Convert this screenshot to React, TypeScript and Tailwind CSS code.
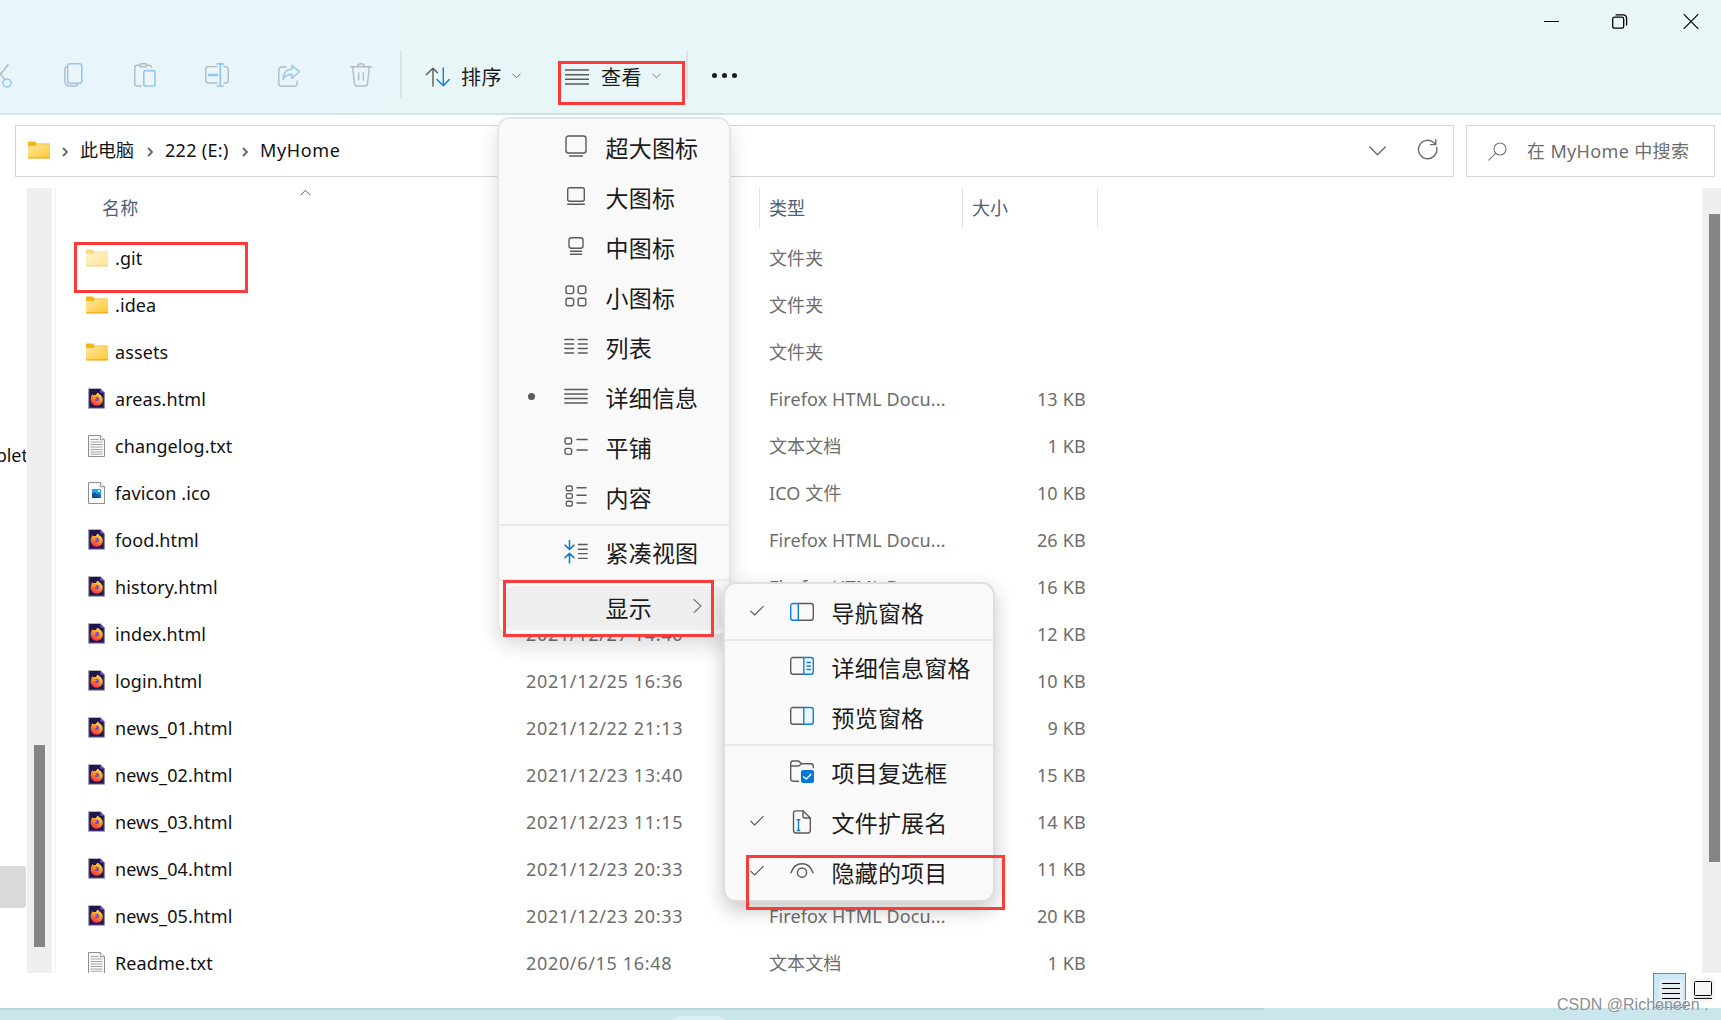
import type { ReactNode } from "react";

type Kind = "folder" | "hidden" | "firefox" | "text" | "image";

interface FileRow {
  name: string;
  kind: Kind;
  date?: string;
  type?: string;
  size?: string;
}

const FOX = "Firefox HTML Docu...";

const files: FileRow[] = [
  { name: ".git", kind: "hidden", type: "文件夹" },
  { name: ".idea", kind: "folder", type: "文件夹" },
  { name: "assets", kind: "folder", type: "文件夹" },
  { name: "areas.html", kind: "firefox", type: FOX, size: "13 KB" },
  { name: "changelog.txt", kind: "text", type: "文本文档", size: "1 KB" },
  { name: "favicon .ico", kind: "image", type: "ICO 文件", size: "10 KB" },
  { name: "food.html", kind: "firefox", type: FOX, size: "26 KB" },
  { name: "history.html", kind: "firefox", type: FOX, size: "16 KB" },
  { name: "index.html", kind: "firefox", date: "2021/12/27 14:40", size: "12 KB" },
  { name: "login.html", kind: "firefox", date: "2021/12/25 16:36", size: "10 KB" },
  { name: "news_01.html", kind: "firefox", date: "2021/12/22 21:13", size: "9 KB" },
  { name: "news_02.html", kind: "firefox", date: "2021/12/23 13:40", size: "15 KB" },
  { name: "news_03.html", kind: "firefox", date: "2021/12/23 11:15", size: "14 KB" },
  { name: "news_04.html", kind: "firefox", date: "2021/12/23 20:33", size: "11 KB" },
  { name: "news_05.html", kind: "firefox", date: "2021/12/23 20:33", type: FOX, size: "20 KB" },
  { name: "Readme.txt", kind: "text", date: "2020/6/15 16:48", type: "文本文档", size: "1 KB" },
];

function Svg({ w = 24, h = 24, children }: { w?: number; h?: number; children: ReactNode }) {
  return (
    <svg
      width={w}
      height={h}
      viewBox={`0 0 ${w} ${h}`}
      fill="none"
      stroke="#5a5a5a"
      strokeWidth="1.4"
      strokeLinecap="round"
      strokeLinejoin="round"
      className="block shrink-0"
    >
      {children}
    </svg>
  );
}

function Defs() {
  return (
    <svg width="0" height="0" className="absolute">
      <defs>
        <linearGradient id="folderFill" x1="0" y1="0" x2="1" y2="1">
          <stop offset="0" stopColor="#ffe8a0" />
          <stop offset="1" stopColor="#ffc832" />
        </linearGradient>
        <linearGradient id="foxFill" x1="0.8" y1="0" x2="0.3" y2="1">
          <stop offset="0" stopColor="#fff04a" />
          <stop offset="0.45" stopColor="#ff9a1f" />
          <stop offset="1" stopColor="#f5264f" />
        </linearGradient>
      </defs>
    </svg>
  );
}

function Folder() {
  return (
    <svg width="22" height="18" viewBox="0 0 22 18" className="block">
      <path d="M0 1.2Q0 .5.8.5H6.3Q7 .5 7.4 1L8.6 2.5H21.4Q22 2.5 22 3.2V8H0Z" fill="#f4b619" />
      <path d="M0 5H7.5L9 3.2H22V16.6Q22 17.2 21.4 17.2H.6Q0 17.2 0 16.6Z" fill="url(#folderFill)" />
      <path d="M0 16.2H22V16.8Q22 17.5 21.4 17.5H.6Q0 17.5 0 16.8Z" fill="#efaa1d" />
    </svg>
  );
}

function FileIcon({ kind }: { kind: Kind }) {
  if (kind === "folder") return <Folder />;
  if (kind === "hidden")
    return (
      <div className="opacity-50">
        <Folder />
      </div>
    );
  if (kind === "firefox")
    return (
      <svg width="17" height="21" viewBox="0 0 17 21" className="block">
        <path d="M.5.5H12.5L16.5 4.5V20.5H.5Z" fill="#21164a" stroke="#b5b3bd" strokeWidth="1" />
        <path d="M1.3 1.2V19.6H15.9V5" fill="none" stroke="#4b3b91" strokeWidth=".9" />
        <path d="M12.3.8L16.3 4.8H13Q12.3 4.8 12.3 4Z" fill="#7a4fe0" />
        <path
          d="M4.2 6C4.6 6.8 5 7 5.5 7.2C6.5 6.8 7.3 6.9 8 7.1C8.2 6 9 5.2 10 4.8C10.4 6.4 14.8 7.2 14.8 11.7A6 6 0 0 1 2.7 11.9C2.7 9.5 3.4 8.4 4.2 6Z"
          fill="url(#foxFill)"
        />
        <circle cx="8.8" cy="11" r="2.2" fill="#7a46c8" />
        <path d="M5.2 9.2Q7.2 9.1 8.9 10.1Q8.3 11.4 6.7 11.4Q5.6 10.8 5.2 9.2Z" fill="#ff981f" />
      </svg>
    );
  return (
    <svg width="17" height="22" viewBox="0 0 17 22" className="block">
      <path d="M.5.5H12.3L16.5 4.7V21.5H.5Z" fill="#fafafa" stroke="#8d8f8f" />
      <path d="M12.3.5V4.7H16.5" fill="#fff" stroke="#8d8f8f" />
      {kind === "text" ? (
        <path
          d="M2.5 4.5H10.5M2.5 7H14.5M2.5 9.5H14.5M2.5 12H14.5M2.5 14.5H14.5M2.5 17H14.5M2.5 19.2H14.5"
          stroke="#a3a5a5"
          strokeWidth="1"
        />
      ) : (
        <>
          <rect x="4" y="7" width="9" height="9" fill="#27a4ea" />
          <path d="M4 12L6.5 10L13 16H4Z" fill="#104f91" />
          <path d="M8.5 12L10.5 10.8L13 13V16H12Z" fill="#1a6eb5" />
          <rect x="10" y="8" width="2" height="2" fill="#d7f2ff" />
        </>
      )}
    </svg>
  );
}

const B = "#0f7fd8";

const icons: Record<string, ReactNode> = {
  xlarge: (
    <Svg>
      <rect x="2" y="1" width="20" height="17" rx="2.5" />
      <path d="M5.5 21H18.5" />
    </Svg>
  ),
  large: (
    <Svg>
      <rect x="3.7" y="2.7" width="16.6" height="13.6" rx="2" />
      <path d="M3.7 19.2H20.3" />
    </Svg>
  ),
  medium: (
    <Svg>
      <rect x="5" y="2.7" width="14" height="10.6" rx="2.5" />
      <path d="M6.5 16.2H17.5M6.5 19.2H17.5" />
    </Svg>
  ),
  small: (
    <Svg>
      <rect x="2" y="1" width="7.6" height="7.6" rx="2" />
      <rect x="14.2" y="1" width="7.6" height="7.6" rx="2" />
      <rect x="2" y="13.2" width="7.6" height="7.6" rx="2" />
      <rect x="14.2" y="13.2" width="7.6" height="7.6" rx="2" />
    </Svg>
  ),
  list: (
    <Svg>
      <path d="M.8 4.5H9.6M.8 9H9.6M.8 13.5H9.6M.8 18H9.6M14.4 4.5H23.2M14.4 9H23.2M14.4 13.5H23.2M14.4 18H23.2" />
    </Svg>
  ),
  details: (
    <Svg>
      <path d="M.8 4.5H23.2M.8 9H23.2M.8 13.5H23.2M.8 18H23.2" />
    </Svg>
  ),
  tiles: (
    <Svg>
      <rect x="1" y="3" width="6.6" height="6" rx="2" />
      <rect x="1" y="13.4" width="6.6" height="6" rx="2" />
      <path d="M13 4.5H23.2M13 15H23.2" />
    </Svg>
  ),
  content: (
    <Svg>
      <rect x="2.3" y="1" width="6" height="4.8" rx="1.6" />
      <rect x="2.3" y="8.6" width="6" height="4.8" rx="1.6" />
      <rect x="2.3" y="16.2" width="6" height="4.8" rx="1.6" />
      <path d="M13 2.8H22M13 10.3H22M13 18H22" />
    </Svg>
  ),
  compact: (
    <Svg>
      <path d="M5.5 0V9M1 5.2L5.5 9.5L10 5.2M5.5 23V13.5M1 17.6L5.5 13.4L10 17.6" stroke={B} strokeWidth="1.6" />
      <path d="M14.4 4.5H23.2M14.4 9.2H23.2M14.4 13.6H23.2M14.4 18.4H23.2" />
    </Svg>
  ),
  nav: (
    <Svg>
      <path d="M8.5 3.5H20.8Q23.3 3.5 23.3 6V17.7Q23.3 20.2 20.8 20.2H8.5" />
      <path d="M8.3 3.5H3.2Q.7 3.5.7 6V17.7Q.7 20.2 3.2 20.2H8.3Z" fill="#eef6fc" stroke={B} />
    </Svg>
  ),
  detailPane: (
    <Svg>
      <path d="M13.5 2.5H3.2Q.7 2.5.7 5V16.7Q.7 19.2 3.2 19.2H13.5" />
      <path d="M13.8 2.5H20.8Q23.3 2.5 23.3 5V16.7Q23.3 19.2 20.8 19.2H13.8Z" fill="#eef6fc" stroke={B} />
      <path d="M17 7.5H20.4M17 11H20.4M17 14.5H20.4" stroke={B} />
    </Svg>
  ),
  preview: (
    <Svg>
      <path d="M13.5 2.5H3.2Q.7 2.5.7 5V16.7Q.7 19.2 3.2 19.2H13.5" />
      <path d="M13.8 2.5H20.8Q23.3 2.5 23.3 5V16.7Q23.3 19.2 20.8 19.2H13.8Z" fill="#eef6fc" stroke={B} />
    </Svg>
  ),
  checkbox: (
    <Svg>
      <path d="M8.5 21.2H3.2Q.7 21.2.7 18.7V3.2Q.7 1 3 1H7.6Q9 1 10 2.2L11.5 3.8H20.5Q23.3 3.8 23.3 6.5V7.5M.9 6H7.8Q9 6 10 5L11.4 3.8" />
      <rect x="11" y="10" width="13" height="13" rx="2" fill="#0078d7" stroke="none" />
      <path d="M13.7 16.7L16.3 19L21 14.2" stroke="#fff" />
    </Svg>
  ),
  ext: (
    <Svg>
      <path d="M5.7.9H13.2L20.3 8V20.6Q20.3 23 17.9 23H5.9Q3.5 23 3.5 20.6V3.1Q3.5.9 5.7.9Z" />
      <path d="M13 1V6.2Q13 8 14.8 8H20" />
      <path d="M6.7 9.8H10.3M8.5 9.8V20.5M6.7 20.5H10.3" stroke={B} strokeLinecap="butt" />
    </Svg>
  ),
  eye: (
    <Svg>
      <path d="M1 12.8C5 .8 19 .8 23 12.8" />
      <circle cx="12" cy="12.6" r="4.6" />
    </Svg>
  ),
};

interface MenuEntry {
  label: string;
  icon?: string;
  bullet?: boolean;
  checked?: boolean;
  open?: boolean;
}

const viewGroups: MenuEntry[][] = [
  [
    { label: "超大图标", icon: "xlarge" },
    { label: "大图标", icon: "large" },
    { label: "中图标", icon: "medium" },
    { label: "小图标", icon: "small" },
    { label: "列表", icon: "list" },
    { label: "详细信息", icon: "details", bullet: true },
    { label: "平铺", icon: "tiles" },
    { label: "内容", icon: "content" },
  ],
  [{ label: "紧凑视图", icon: "compact" }],
  [{ label: "显示", open: true }],
];

const showGroups: MenuEntry[][] = [
  [{ label: "导航窗格", icon: "nav", checked: true }],
  [
    { label: "详细信息窗格", icon: "detailPane" },
    { label: "预览窗格", icon: "preview" },
  ],
  [
    { label: "项目复选框", icon: "checkbox" },
    { label: "文件扩展名", icon: "ext", checked: true },
    { label: "隐藏的项目", icon: "eye", checked: true },
  ],
];

function Item({ e }: { e: MenuEntry }) {
  return (
    <li className="flex h-[50px] items-center px-[7px]">
      <div
        className={
          e.open
            ? "flex h-11 w-full items-center rounded-md bg-[#efefef]"
            : "flex h-11 w-full items-center"
        }
      >
        <span className="flex w-[58px] justify-center pr-[8px] pb-[4px]">
          {e.bullet && <span className="block size-[7px] rounded-full bg-[#5a5a5a]" />}
          {e.checked && (
            <Svg w={14} h={12}>
              <path d="M.7 6.2L4.6 10L13.3 1.3" strokeWidth="1.1" />
            </Svg>
          )}
        </span>
        <span className="mr-[17px] block h-6 w-6 -translate-y-px">{e.icon && icons[e.icon]}</span>
        <span className="grow pb-px pl-[0.5px] text-[23px] leading-[30px] tracking-[0.2px] whitespace-nowrap text-[#1b1b1b]">
          {e.label}
        </span>
        {e.open && (
          <span className="mr-[20px] pb-[4px]">
            <Svg w={9} h={16}>
              <path d="M1 1.5L8 8L1 14.5" stroke="#777" strokeWidth="1.1" />
            </Svg>
          </span>
        )}
      </div>
    </li>
  );
}

function Menu({ groups }: { groups: MenuEntry[][] }) {
  return (
    <>
      {groups.map((g, i) => (
        <ul key={i} className={i > 0 ? "mt-px border-t-2 border-[#e9e9e9] pt-[2px]" : ""}>
          {g.map((e) => (
            <Item key={e.label} e={e} />
          ))}
        </ul>
      ))}
    </>
  );
}

function Crumb() {
  return (
    <Svg w={6} h={10}>
      <path d="M1 1L5 5L1 9" stroke="#666" strokeWidth="1.8" strokeLinecap="butt" />
    </Svg>
  );
}

function DropChevron() {
  return (
    <Svg w={9} h={6}>
      <path d="M.8 1L4.5 4.8L8.2 1" stroke="#777" strokeWidth="1" />
    </Svg>
  );
}

const G = "#b4bcbe";
const L = "#93c8ee";

function Toolbar() {
  return (
    <div className="flex h-[72px] items-start pt-[14px]">
      <div className="flex h-[40px] w-[400px] shrink-0 items-center">
        <span className="w-[64px] pt-px">
          <Svg w={12} h={24}>
            <path d="M8 .8L0 11M0 9L4.5 15.5" stroke={G} />
            <circle cx="7" cy="19" r="4" stroke={L} strokeWidth="1.6" />
          </Svg>
        </span>
        <span className="w-[70px]">
          <Svg w={19} h={24}>
            <path d="M3 3.5Q.8 4 .8 6.5V17.5Q.8 23 6 23H11Q13.4 23 14 21" stroke={G} />
            <rect x="3.6" y=".8" width="14.2" height="19.6" rx="2.6" stroke={L} strokeWidth="1.6" fill="#edf5f7" />
          </Svg>
        </span>
        <span className="w-[71px]">
          <Svg w={23} h={24}>
            <path d="M6 2.3H3Q.8 2.3.8 4.5V20.7Q.8 23 3 23H7M12.3 2.3H15Q17.2 2.3 17.4 4.4" stroke={G} />
            <rect x="5.5" y=".8" width="7.4" height="3" rx="1.5" stroke={G} />
            <rect x="9.8" y="7.6" width="11.2" height="15.4" rx="1.8" stroke={L} strokeWidth="1.6" fill="#edf5f7" />
          </Svg>
        </span>
        <span className="w-[73px]">
          <Svg w={24} h={24}>
            <path
              d="M12 3.6H3.2Q.8 3.6.8 6V17.6Q.8 20 3.2 20H12M19 3.6H20.8Q23.2 3.6 23.2 6V17.6Q23.2 20 20.8 20H19"
              stroke={G}
            />
            <path d="M12.3.9H18.3M12.3 23H18.3M15.3.9V23" stroke={L} strokeWidth="1.7" />
            <path d="M4 12H12" stroke={L} strokeWidth="2.6" />
          </Svg>
        </span>
        <span className="w-[72px] pt-px">
          <Svg w={23} h={24}>
            <path d="M8 3H4Q.8 3 .8 6V19Q.8 22.2 4 22.2H16Q19.2 22.2 19.2 19V17" stroke={G} />
            <path d="M14 1.4L21.4 7.8L14 14.2V10.6C10 10.4 7 12 5 15.4C5.2 9.2 8.6 5.4 14 5Z" stroke={L} strokeWidth="1.5" />
          </Svg>
        </span>
        <span>
          <Svg w={22} h={24}>
            <path
              d="M.7 3.7H21.3M7.5 3.5Q8 .8 11 .8Q14 .8 14.5 3.5M2.7 4L4.5 20.8Q4.8 23 6.8 23H15.2Q17.2 23 17.5 20.8L19.3 4M8.7 10V17M13.3 10V17"
              stroke={G}
            />
          </Svg>
        </span>
      </div>
      <div className="-mt-1 h-12 w-[2px] bg-[#d7e4e6]" />
      <div className="ml-[23px] flex h-10 items-center">
        <span className="pt-[3px]">
          <Svg w={25} h={20}>
            <path d="M8 19V1.3M1.5 7.6L8 1.3L12.5 5.7" />
            <path d="M18.3 1V18.6M12 12.6L18.3 18.8L24.3 12.6" stroke={B} />
          </Svg>
        </span>
        <span className="ml-[11px] pt-[6px] text-[20px] leading-6 tracking-[0.5px] text-[#1b1b1b]">排序</span>
        <span className="ml-[10px] pt-px">
          <DropChevron />
        </span>
      </div>
      <div className="relative ml-[44px] flex h-10 w-[120px] items-center">
        <svg width="24" height="24" viewBox="0 0 24 24" fill="none" stroke="#5a5a5a" strokeWidth="1.4" className="mt-[3px]">
          <path d="M0 5H24M0 9.7H24M0 14.3H24M0 19H24" />
        </svg>
        <span className="ml-3 pt-[6px] text-[20px] leading-6 tracking-[0.5px] text-[#1b1b1b]">查看</span>
        <span className="ml-[10px] pt-px">
          <DropChevron />
        </span>
        <div className="absolute top-[6px] -left-[7px] h-[44px] w-[127px] border-[3px] border-[#fc3a3a]" />
      </div>
      <div className="-mt-1 ml-px h-12 w-[2px] bg-[#d7e4e6]" />
      <div className="mt-[18px] ml-[24px] flex gap-[5px]">
        <span className="size-[5px] rounded-full bg-[#1b1b1b]" />
        <span className="size-[5px] rounded-full bg-[#1b1b1b]" />
        <span className="size-[5px] rounded-full bg-[#1b1b1b]" />
      </div>
    </div>
  );
}

function TitleBar() {
  return (
    <div className="flex h-[41px] items-start justify-end gap-[54px] pt-[14px] pr-[22px]">
      <svg width="15" height="15" viewBox="0 0 15 15" stroke="#000" fill="none" className="-mr-px">
        <path d="M0 7.5H15" />
      </svg>
      <svg width="17" height="15" viewBox="0 0 17 15" stroke="#000" fill="none" strokeWidth="1.3">
        <rect x=".7" y="3.2" width="11" height="11" rx="1.8" />
        <path d="M3.6.8H11Q14.6.8 14.6 4.4V11.6" />
      </svg>
      <svg width="16" height="15" viewBox="0 0 16 15" stroke="#000" fill="none" strokeWidth="1.2">
        <path d="M.7.2L15.3 14.8M15.3.2L.7 14.8" />
      </svg>
    </div>
  );
}

function AddressRow() {
  return (
    <div className="flex h-[52px] gap-3 pr-[6px] pl-[15px] text-[18px]">
      <div className="flex w-[1439px] items-center border border-[#d5d7d7] pl-[12px] text-[#111]">
        <span className="-mt-[3px]">
          <Folder />
        </span>
        <span className="mt-px ml-[12px]">
          <Crumb />
        </span>
        <span className="ml-[12px] w-[54px] pb-[2px] leading-6">此电脑</span>
        <span className="mt-px ml-[13px]">
          <Crumb />
        </span>
        <span className="ml-[12px] w-[64px] pb-[2px] tracking-[0.3px] whitespace-nowrap">222 (E:)</span>
        <span className="mt-px ml-[13px]">
          <Crumb />
        </span>
        <span className="ml-[12px] grow pb-[2px] tracking-[0.65px]">MyHome</span>
        <Svg w={17} h={10}>
          <path d="M.8 1L8.5 8.8L16.2 1" stroke="#6b6b6b" />
        </Svg>
        <span className="mr-[15px] mb-[3px] ml-[31px]">
          <Svg w={21} h={21}>
            <path d="M19.6 8.2A9.2 9.2 0 1 1 16.3 3.2L18.6 5.2M18.8.8V5.6H13.6" stroke="#6b6b6b" />
          </Svg>
        </span>
      </div>
      <div className="flex w-[249px] items-center border border-[#d5d7d7] pl-[21px] text-[#6d6d6d]">
        <Svg w={19} h={19}>
          <circle cx="12" cy="7" r="6" stroke="#777" strokeWidth="1.1" />
          <path d="M7.6 11.4L.8 18.2" stroke="#777" strokeWidth="1.1" />
        </Svg>
        <span className="ml-[20px] tracking-[0.35px] whitespace-nowrap">在 MyHome 中搜索</span>
      </div>
    </div>
  );
}

function Sidebar() {
  return (
    <>
      <div className="flex w-[27px] flex-col overflow-hidden text-[18px]">
        <div className="mt-[255px] flex h-6 w-[26px] justify-end overflow-hidden leading-6 text-[#111]">
          <span className="-mr-[2px]">plet</span>
        </div>
        <div className="mt-[399px] h-[42px] w-[26px] rounded-r-[3px] bg-[#d9d9d9]" />
      </div>
      <div className="w-[25px] bg-[#efefef] pt-[557px] pl-[7px]">
        <div className="h-[202px] w-[11px] bg-[#858585]" />
      </div>
      <div className="ml-[2px] w-[2px] bg-[#f6f6f6]" />
    </>
  );
}

function FileList() {
  return (
    <div className="grow overflow-hidden">
      <div className="flex h-10 text-[18px] leading-[41px] text-[#4c607a]">
        <div className="flex w-[703px] pl-[46px]">
          <span className="tracking-[0.3px]">名称</span>
          <span className="mt-px ml-[161px]">
            <Svg w={11} h={7}>
              <path d="M.8 6L5.5 1.3L10.2 6" stroke="#555" strokeWidth="1" />
            </Svg>
          </span>
        </div>
        <div className="w-[203px] border-l border-[#e2e2e2] pl-[9px]">类型</div>
        <div className="w-[136px] border-x border-[#e2e2e2] pl-[9px]">大小</div>
      </div>
      <div className="mt-[6px] text-[18px] leading-6 text-[#6d6d6d]">
        {files.map((f) => (
          <div key={f.name} className="flex h-[47px] items-center">
            <div className="flex w-[59px] justify-center pl-[22px]">
              <FileIcon kind={f.kind} />
            </div>
            <div className="w-[411px] pt-px tracking-[0.1px] text-[#111]">{f.name}</div>
            <div className="w-[243px] pt-px tracking-[0.67px]">{f.date}</div>
            <div className="w-[203px] pt-px tracking-[0.12px]">{f.type}</div>
            <div className="w-[114px] pt-px text-right tracking-[0.2px]">{f.size}</div>
          </div>
        ))}
      </div>
    </div>
  );
}

function StatusBar() {
  return (
    <div className="flex h-[35px] justify-end pr-[6px]">
      <div className="flex h-[35px] w-[33px] items-end justify-center border border-[#26a0da] bg-[#cbe8f6] pb-1">
        <div className="ml-[3px] flex h-6 w-6 items-center justify-center rounded bg-[#e4eff5]">
          <svg width="18" height="17" viewBox="0 0 18 17" stroke="#000" fill="none" className="mt-px">
            <path d="M0 .5H18M0 5.5H18M0 10.5H18M0 15.5H18" />
          </svg>
        </div>
      </div>
      <div className="mt-[5px] ml-[5px] flex h-6 w-6 items-center justify-center rounded bg-[#f6f6f6]">
        <svg width="18" height="19" viewBox="0 0 18 19" stroke="#000" fill="none" className="-mt-px">
          <rect x=".5" y="1.5" width="17" height="14" rx="1" />
          <path d="M0 18.4H18" />
        </svg>
      </div>
    </div>
  );
}

export default function App() {
  return (
    <div className="relative flex h-[1020px] w-[1721px] flex-col overflow-hidden bg-white font-['Noto_Sans','Noto_Sans_CJK_SC',sans-serif]">
      <Defs />
      <header className="h-[115px] shrink-0 border-b-2 border-[#d4e5e6] bg-[linear-gradient(100deg,#e8f5fa_0px,#e9f5fb_330px,#e8f6f7_430px)]">
        <TitleBar />
        <Toolbar />
      </header>
      <div className="pt-[10px]">
        <AddressRow />
      </div>
      <main className="mt-[11px] flex h-[785px] shrink-0 overflow-hidden">
        <Sidebar />
        <FileList />
        <div className="w-[19px] shrink-0 bg-[#efefef] pt-[26px] pl-[7px]">
          <div className="h-[648px] w-[11px] bg-[#858585]" />
        </div>
      </main>
      <StatusBar />
      <footer className="h-3 overflow-hidden bg-[#c9e6ec]">
        <div className="h-[2px] w-[1264px] bg-[#b8d5da]" />
        <div className="mt-[6px] ml-[672px] h-4 w-[54px] rounded-lg bg-[#dceff3]" />
      </footer>

      <div className="absolute top-[117px] left-[497px] h-[519px] w-[234px] rounded-[13px] border-2 border-[#e6e6e6] bg-[#f9f9f9] pt-[4px] shadow-[0_10px_20px_rgba(0,0,0,0.14)]">
        <Menu groups={viewGroups} />
      </div>
      <div className="absolute top-[582px] left-[723px] h-[320px] w-[272px] rounded-[13px] border-2 border-[#dedede] bg-[#f9f9f9] pt-[4px] shadow-[0_8px_20px_rgba(0,0,0,0.22)]">
        <Menu groups={showGroups} />
      </div>

      <div className="absolute top-[242px] left-[74px] h-[51px] w-[174px] border-[3px] border-[#fc3a3a]" />
      <div className="absolute top-[580px] left-[503px] h-[57px] w-[211px] border-[3px] border-[#fc3a3a]" />
      <div className="absolute top-[855px] left-[746px] h-[55px] w-[259px] border-[3px] border-[#fc3a3a]" />

      <div className="absolute top-[995px] left-[1557px] font-['Liberation_Sans',sans-serif] text-[16px] leading-5 whitespace-nowrap text-[#8c9194] [text-shadow:-1px_-1px_0_rgba(255,255,255,0.8)]">
        CSDN @Richeneen .
      </div>
    </div>
  );
}
